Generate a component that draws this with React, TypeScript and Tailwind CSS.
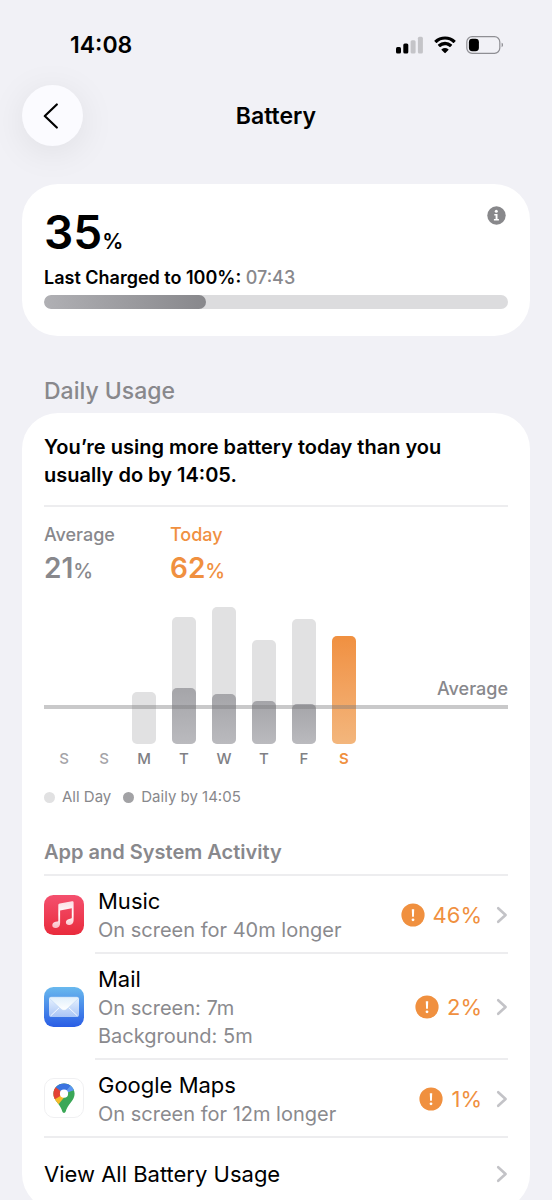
import type { ReactNode } from "react";

type Day = { label: string; all: number; by: number; tone: "empty" | "past" | "today" };

const days: Day[] = [
  { label: "S", all: 0, by: 0, tone: "empty" },
  { label: "S", all: 0, by: 0, tone: "empty" },
  { label: "M", all: 52, by: 0, tone: "past" },
  { label: "T", all: 127, by: 56, tone: "past" },
  { label: "W", all: 137, by: 50, tone: "past" },
  { label: "T", all: 104, by: 43, tone: "past" },
  { label: "F", all: 125, by: 40, tone: "past" },
  { label: "S", all: 108, by: 0, tone: "today" },
];

function Signal() {
  return (
    <svg className="h-[18px] w-7" viewBox="0 0 28 18" aria-hidden="true">
      <rect x="0" y="11" width="5" height="6.5" rx="1.5" fill="#000" />
      <rect x="7.3" y="7.5" width="5" height="10" rx="1.5" fill="#000" />
      <rect x="14.6" y="4.3" width="5" height="13.2" rx="1.5" fill="#c4c4c8" />
      <rect x="21.9" y="0.7" width="5" height="16.8" rx="1.5" fill="#c4c4c8" />
    </svg>
  );
}

function Wifi() {
  return (
    <svg className="h-[18px] w-6" viewBox="0 0 24 18" aria-hidden="true">
      <path d="M12 3.6c3.1 0 6 1.2 8.2 3.3.2.2.5.2.6 0l1.700-1.700c.2-.2.2-.5 0-.7A15.100 15.100 0 0 0 12 .4C8.100.4 4.300 1.900 1.500 4.500c-.2.2-.2.5 0 .7l1.700 1.700c.2.2.5.2.6 0C6 4.800 8.900 3.600 12 3.600Z" />
      <path d="M12 9.200c1.700 0 3.300.6 4.600 1.800.2.2.5.2.7 0l1.700-1.700c.2-.2.2-.5 0-.7a10.200 10.200 0 0 0-14 0c-.2.2-.2.5 0 .7L6.700 11c.2.2.5.2.7 0A6.800 6.800 0 0 1 12 9.200Z" />
      <path d="M15.400 14c.2-.2.2-.5 0-.7a5.300 5.300 0 0 0-6.800 0c-.2.200-.2.500 0 .7l3.100 3.100c.2.200.5.200.7 0Z" />
    </svg>
  );
}

function BatteryLevel() {
  return (
    <svg className="h-[18px] w-[38px]" viewBox="0 0 38 18" aria-hidden="true">
      <rect x="0.8" y="0.7" width="33" height="16.600" rx="5.300" fill="none" stroke="#8f8f94" strokeWidth="1.200" />
      <rect x="2.900" y="2.800" width="10" height="12.400" rx="3.400" fill="#000" />
      <path d="M35.600 6.800c1.900.6 1.900 3.800 0 4.400Z" fill="#8f8f94" />
    </svg>
  );
}

function Chevron() {
  return (
    <svg className="h-[18px] w-3 shrink-0" viewBox="0 0 12 18" fill="none" aria-hidden="true">
      <path d="M2.200 2.200 9.600 9l-7.400 6.800" stroke="#c3c3c7" strokeWidth="2.600" strokeLinecap="round" strokeLinejoin="round" />
    </svg>
  );
}

function Alert() {
  return (
    <svg className="size-6 shrink-0" viewBox="0 0 24 24" aria-hidden="true">
      <circle cx="12" cy="12" r="11.600" fill="#f0903f" />
      <path d="M10.800 6.200h2.400l-.3 7.600h-1.800Z" fill="#fff" />
      <circle cx="12" cy="16.800" r="1.400" fill="#fff" />
    </svg>
  );
}

function MusicIcon() {
  return (
    <svg className="size-10" viewBox="0 0 40 40" aria-hidden="true">
      <defs>
        <linearGradient id="music-bg" x1="0" y1="0" x2="0" y2="1">
          <stop offset="0" stopColor="#f4506e" />
          <stop offset="1" stopColor="#e92b3c" />
        </linearGradient>
        <linearGradient id="music-note" x1="0" y1="0" x2="0" y2="1">
          <stop offset="0" stopColor="#fcdde4" />
          <stop offset="0.5" stopColor="#fff" />
          <stop offset="1" stopColor="#fbb9c2" />
        </linearGradient>
      </defs>
      <rect width="40" height="40" rx="9.500" fill="url(#music-bg)" />
      <path
        d="M14.300 10.300c0-1 .5-1.500 1.500-1.700l12.200-2.300c1-.2 1.600.3 1.600 1.300v17.600c0 2.700-1.400 4.300-3.900 4.800-2.200.4-3.800-.8-3.800-2.700 0-1.800 1.200-3 3.300-3.400l1.700-.3c.6-.1.900-.5.900-1.100V13.200l-11.700 2.200v12.500c0 2.900-1.300 4.500-3.900 5-2.300.4-3.900-.8-3.900-2.700 0-1.800 1.200-3 3.300-3.400l1.800-.3c.6-.1.900-.5.900-1.100Z"
        fill="url(#music-note)"
      />
    </svg>
  );
}

function MailIcon() {
  return (
    <svg className="size-10" viewBox="0 0 40 40" aria-hidden="true">
      <defs>
        <linearGradient id="mail-bg" x1="0" y1="0" x2="0" y2="1">
          <stop offset="0" stopColor="#69b9ee" />
          <stop offset="1" stopColor="#2a5de5" />
        </linearGradient>
        <linearGradient id="mail-body" x1="0" y1="0" x2="0" y2="1">
          <stop offset="0" stopColor="#e9f3ff" />
          <stop offset="1" stopColor="#a9c5f6" />
        </linearGradient>
        <linearGradient id="mail-flap" x1="0" y1="0" x2="0" y2="1">
          <stop offset="0" stopColor="#e0effc" />
          <stop offset="1" stopColor="#fff" />
        </linearGradient>
      </defs>
      <rect width="40" height="40" rx="9.500" fill="url(#mail-bg)" />
      <rect x="5" y="10" width="30" height="20" rx="2.500" fill="url(#mail-body)" />
      <path d="m6.500 29 10-9.500M33.500 29l-10-9.500" stroke="#f6faff" strokeWidth="1" />
      <path d="M5.300 11.300C5.700 10.500 6.500 10 7.500 10h25c1 0 1.800.5 2.200 1.300L23 22c-1.800 1.700-4.200 1.700-6 0Z" fill="url(#mail-flap)" stroke="#b7d2f5" strokeWidth="0.500" />
    </svg>
  );
}

function MapsIcon() {
  return (
    <svg className="size-10" viewBox="0 0 40 40" aria-hidden="true">
      <defs>
        <clipPath id="pin">
          <path d="M20 5.500c6 0 10.600 4.600 10.600 10.300 0 3.400-1.500 5.700-3.600 8.400-2.500 3.100-4.300 5.500-5.300 9.300-.5 1.900-2.900 1.900-3.400 0-1-3.800-2.800-6.200-5.300-9.300-2.100-2.700-3.600-5-3.600-8.400C9.400 10.100 14 5.500 20 5.500Z" />
        </clipPath>
      </defs>
      <rect x="0.500" y="0.500" width="39" height="39" rx="9.500" fill="#fff" stroke="#f0f0f2" />
      <g clipPath="url(#pin)">
        <rect x="9" y="5" width="22" height="31" fill="#3aa757" />
        <path d="M6 21 20 5l7 6-13.500 16.500L8 32Z" fill="#f6ba29" />
        <path d="M11 8 20 15.700 10.500 21.500 5 18Z" fill="#e34234" />
        <path d="M11.500 9 14 4h15l-3 5-6 6.700Z" fill="#3b73e0" />
        <path d="m20 15.700 7-8.700 6 2-2.500 3Z" fill="#5b97f3" />
      </g>
      <circle cx="20" cy="15.700" r="4.100" fill="#fff" />
    </svg>
  );
}

const apps: { name: string; icon: ReactNode; details: string[]; share: string }[] = [
  { name: "Music", icon: <MusicIcon />, details: ["On screen for 40m longer"], share: "46%" },
  { name: "Mail", icon: <MailIcon />, details: ["On screen: 7m", "Background: 5m"], share: "2%" },
  { name: "Google Maps", icon: <MapsIcon />, details: ["On screen for 12m longer"], share: "1%" },
];

function StatusBar() {
  return (
    <div className="flex h-[85px] items-center justify-between pt-1 pr-12 pl-[70px]">
      <span className="text-[23px] leading-7 font-semibold">14:08</span>
      <div className="flex items-center gap-[9px]">
        <Signal />
        <Wifi />
        <BatteryLevel />
      </div>
    </div>
  );
}

function Header() {
  return (
    <header className="grid grid-cols-[61px_1fr_61px] items-center px-[22px]">
      <button
        type="button"
        aria-label="Back"
        className="flex size-[61px] items-center justify-center rounded-full bg-[#fbfbff] shadow-[0_6px_36px_rgba(0,0,0,0.08)]"
      >
        <svg className="h-[26px] w-5" viewBox="0 0 20 26" fill="none" aria-hidden="true">
          <path d="M13.800 1.500 1.800 13l12 11.500" stroke="#000" strokeWidth="2.200" strokeLinecap="round" strokeLinejoin="round" />
        </svg>
      </button>
      <h1 className="text-center text-[23px] leading-7 font-semibold">Battery</h1>
    </header>
  );
}

function ChargeCard() {
  return (
    <section className="mt-[38px] rounded-[36px] bg-white px-[22px] pt-5 pb-[27px]">
      <div className="flex items-start justify-between">
        <p className="pt-0.5 text-[46px] leading-[52px] font-semibold">
          35<span className="text-[21px] leading-none">%</span>
        </p>
        <button type="button" aria-label="Battery information" className="mt-0.5 mr-0.5">
          <svg className="size-[19px]" viewBox="0 0 19 19" aria-hidden="true">
            <circle cx="9.500" cy="9.500" r="9.200" fill="#88888b" />
            <circle cx="9.300" cy="5.200" r="1.500" fill="#fff" />
            <path d="M7.300 8h3.200v5h1.400v1.400H6.900V13h1.700V9.400H7.300Z" fill="#fff" />
          </svg>
        </button>
      </div>
      <p className="mt-1.5 text-[18px] leading-7 font-semibold">
        Last Charged to 100%: <span className="font-medium text-[#88888c]">07:43</span>
      </p>
      <div className="mt-[3px] h-3.5 overflow-hidden rounded-full bg-[#dcdcde]">
        <div className="h-full w-[35%] rounded-full bg-linear-to-r from-[#b0b0b4] to-[#88888c]" />
      </div>
    </section>
  );
}

function UsageChart() {
  return (
    <div className="mt-[19px]">
      <div className="relative">
        <div className="flex h-[138px] items-end">
          {days.map((d, i) => (
            <div key={i} className="flex w-10 justify-center">
              <div
                className={
                  d.tone === "today"
                    ? "w-6 rounded-[5px] bg-linear-to-b from-[#f09040] to-[#f3b67c]"
                    : "flex w-6 items-end rounded-[5px] bg-[#e1e1e2]"
                }
                style={{ height: d.all }}
              >
                <div className="w-full rounded-[5px] bg-linear-to-b from-[#a5a5a9] to-[#bababe]" style={{ height: d.by }} />
              </div>
            </div>
          ))}
        </div>
        <div className="absolute inset-x-0 bottom-[35px] h-1 bg-[#77777b]/40" />
        <span className="absolute right-0 bottom-[43px] text-[18px] leading-6 font-medium text-[#88888c]">Average</span>
      </div>
      <div className="mt-1 flex">
        {days.map((d, i) => (
          <span
            key={i}
            className={
              d.tone === "today"
                ? "w-10 text-center text-[15px] leading-[22px] font-semibold text-[#f0903f]"
                : d.tone === "empty"
                  ? "w-10 text-center text-[15px] leading-[22px] font-medium text-[#a4a4a8]"
                  : "w-10 text-center text-[15px] leading-[22px] font-medium text-[#808084]"
            }
          >
            {d.label}
          </span>
        ))}
      </div>
      <div className="mt-4 flex items-center gap-3 text-[15px] leading-[22px] text-[#88888c]">
        <span className="flex items-center gap-[7px]">
          <i className="size-[11px] rounded-full bg-[#e1e1e2]" />
          All Day
        </span>
        <span className="flex items-center gap-[7px]">
          <i className="size-[11px] rounded-full bg-[#a2a2a5]" />
          Daily by 14:05
        </span>
      </div>
    </div>
  );
}

export default function App() {
  return (
    <div className="h-screen overflow-y-auto bg-[#f1f1f6] font-['Inter','Liberation_Sans',sans-serif] text-black [scrollbar-width:none]">
      <StatusBar />
      <Header />
      <main className="px-[22px] pb-10">
        <ChargeCard />
        <h2 className="mt-10 mb-[7px] pl-[22px] text-[23px] leading-[30px] font-medium text-[#88888c]">Daily Usage</h2>
        <section className="rounded-[36px] bg-white px-[22px] pt-5">
          <p className="border-b-2 border-[#ededef] pb-4 text-[20px] leading-7 font-semibold">
            You’re using more battery today than you usually do by 14:05.
          </p>
          <div className="flex pt-4 font-medium">
            <div className="w-[126px] text-[#88888c]">
              <p className="text-[18px] leading-6">Average</p>
              <p className="pt-0.5 text-[28px] leading-[38px] font-semibold">
                21<span className="text-[20px] leading-none font-medium">%</span>
              </p>
            </div>
            <div className="text-[#f0903f]">
              <p className="text-[18px] leading-6">Today</p>
              <p className="pt-0.5 text-[28px] leading-[38px] font-semibold">
                62<span className="text-[20px] leading-none font-medium">%</span>
              </p>
            </div>
          </div>
          <UsageChart />
          <h3 className="mt-[30px] border-b-2 border-[#ededef] pb-2 text-[20px] leading-7 font-semibold text-[#88888c]">
            App and System Activity
          </h3>
          <ul>
            {apps.map((app) => (
              <li key={app.name} className="group">
                <a href="#app" className="flex group-last:border-b-2 group-last:border-[#ededef]">
                  <span className="flex w-[51px] shrink-0 items-center">{app.icon}</span>
                  <span className="flex grow items-center border-b-2 border-[#ededef] pt-2.5 pb-2 pl-[3px] group-last:border-b-0">
                    <span className="grow">
                      <span className="block text-[22px] leading-[30px]">{app.name}</span>
                      {app.details.map((line) => (
                        <span key={line} className="block text-[20px] leading-7 text-[#8a8a8e]">
                          {line}
                        </span>
                      ))}
                    </span>
                    <span className="flex items-center">
                      <Alert />
                      <span className="pr-3.5 pl-2 text-[22px] leading-7 text-[#f0903f]">{app.share}</span>
                      <Chevron />
                    </span>
                  </span>
                </a>
              </li>
            ))}
          </ul>
          <a href="#all" className="flex h-[72px] items-center justify-between">
            <span className="text-[22px] leading-7">View All Battery Usage</span>
            <Chevron />
          </a>
        </section>
      </main>
    </div>
  );
}
